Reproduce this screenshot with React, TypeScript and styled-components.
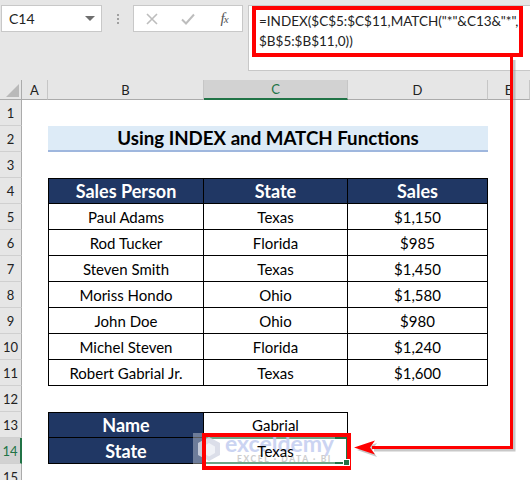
import React from 'react';
import styled, { createGlobalStyle, css } from 'styled-components';

const FONT = `Lato, "Open Sans", "Liberation Sans", sans-serif`;
const NAVY = '#203764';
const GREEN = '#217346';
const COLS = '22px 26px 156px 144px 140px 1fr';

const Global = createGlobalStyle`
  html, body { margin: 0; padding: 0; background: #ffffff; }
  body { font-family: ${FONT}; width: 530px; height: 480px; overflow: hidden; }
  * { box-sizing: border-box; }
`;

const Page = styled.div`
  position: relative;
  width: 530px;
  height: 480px;
  overflow: hidden;
  background: #ffffff;
`;

/* ---------- top formula area ---------- */
const TopBar = styled.div`
  height: 80px;
  background: #e6e6e6;
  display: flex;
  align-items: flex-start;
  padding: 5px 0 0 1px;
`;

const NameBox = styled.div`
  width: 101px;
  height: 27px;
  background: #ffffff;
  border: 1px solid #c8c8c8;
  display: flex;
  align-items: center;
  justify-content: space-between;
  padding: 0 6px 0 7px;
  font-size: 14px;
  color: #222;
`;

const Caret = styled.span`
  width: 0;
  height: 0;
  border-left: 5px solid transparent;
  border-right: 5px solid transparent;
  border-top: 5px solid #6e6e6e;
`;

const Dots = styled.div`
  width: 31px;
  height: 27px;
  display: flex;
  flex-direction: column;
  align-items: center;
  justify-content: center;
  gap: 2px;
  & > i {
    display: block;
    width: 2px;
    height: 2px;
    background: #a0a0a0;
  }
`;

const FxBox = styled.div`
  width: 110px;
  height: 27px;
  background: #ffffff;
  border: 1px solid #c8c8c8;
  display: flex;
  align-items: center;
`;

const IconSlot = styled.span`
  width: 36px;
  display: flex;
  align-items: center;
  justify-content: center;
`;

const Fx = styled.span`
  font-family: "Liberation Serif", "DejaVu Serif", serif;
  font-style: italic;
  font-size: 15px;
  color: #555;
  letter-spacing: -1px;
  & > small {
    font-size: 11px;
  }
`;

const FormulaBar = styled.div`
  flex: 1;
  margin-left: 5px;
  height: 66px;
  background: #ffffff;
  border: 1px solid #c8c8c8;
  border-right: none;
  padding: 5px 0 0 10px;
  font-size: 13.5px;
  line-height: 20px;
  color: #222;
  white-space: pre;
`;

/* ---------- sheet ---------- */
const HeaderRow = styled.div`
  display: grid;
  grid-template-columns: ${COLS};
  height: 20px;
  background: #e6e6e6;
`;

const ColHead = styled.div<{ $active?: boolean }>`
  display: flex;
  align-items: center;
  justify-content: center;
  font-size: 13px;
  color: #222;
  border-right: 1px solid #c6c6c6;
  border-bottom: 1px solid #ababab;
  ${(p) =>
    p.$active &&
    css`
      background: #d2d2d2;
      color: ${GREEN};
      border-bottom: 2px solid ${GREEN};
    `}
`;

const Corner = styled.div`
  border-right: 1px solid #ababab;
  border-bottom: 1px solid #ababab;
  & > svg {
    display: block;
  }
`;

const Row = styled.div`
  display: grid;
  grid-template-columns: ${COLS};
  height: 26px;
`;

const RowNum = styled.div<{ $active?: boolean }>`
  display: flex;
  align-items: center;
  justify-content: center;
  background: #e6e6e6;
  border-right: 1px solid #ababab;
  border-bottom: 1px solid #d0d0d0;
  font-size: 13px;
  color: #222;
  ${(p) =>
    p.$active &&
    css`
      background: #d2d2d2;
      color: ${GREEN};
      border-right: 2px solid ${GREEN};
    `}
`;

const Blank = styled.div``;

const Title = styled.div`
  grid-column: span 3;
  display: flex;
  align-items: center;
  justify-content: center;
  background: #ddebf7;
  border-bottom: 2px solid #9fb7de;
  font-weight: 700;
  font-size: 18.7px;
  color: #000;
`;

type Kind = 'head' | 'data';

const Cell = styled.div<{ $kind: Kind; $top?: boolean; $left?: boolean; $sel?: boolean }>`
  position: relative;
  display: flex;
  align-items: center;
  justify-content: center;
  border-right: 1px solid #000;
  border-bottom: 1px solid #000;
  border-top: ${(p) => (p.$top ? '1px solid #000' : 'none')};
  border-left: ${(p) => (p.$left ? '1px solid #000' : 'none')};
  font-size: 15px;
  color: #000;
  ${(p) =>
    p.$kind === 'head' &&
    css`
      background: ${NAVY};
      color: #ffffff;
      font-weight: 700;
      font-size: 18px;
    `}
  ${(p) =>
    p.$sel &&
    css`
      &::after {
        content: '';
        position: absolute;
        left: -1px;
        top: -1px;
        right: -1px;
        bottom: -1px;
        border: 2px solid ${GREEN};
      }
      &::before {
        content: '';
        position: absolute;
        right: -3px;
        bottom: -3px;
        width: 5px;
        height: 5px;
        background: ${GREEN};
        border: 1px solid #fff;
        z-index: 1;
      }
    `}
`;

/* text of the active cell stays above the faint watermark */
const OnTop = styled.span`
  position: relative;
  z-index: 2;
`;

const Overlay = styled.svg`
  position: absolute;
  left: 0;
  top: 0;
  pointer-events: none;
`;

const WM = styled.text`
  font-family: ${FONT};
  font-weight: 700;
`;

const people = [
  ['Paul Adams', 'Texas', '$1,150'],
  ['Rod Tucker', 'Florida', '$985'],
  ['Steven Smith', 'Texas', '$1,450'],
  ['Moriss Hondo', 'Ohio', '$1,580'],
  ['John Doe', 'Ohio', '$980'],
  ['Michel Steven', 'Florida', '$1,240'],
  ['Robert Gabrial Jr.', 'Texas', '$1,600'],
];

function SheetRow({ n, children }: { n: number; children?: React.ReactNode }) {
  return (
    <Row>
      <RowNum $active={n === 14}>{n}</RowNum>
      <Blank />
      {children ?? (
        <>
          <Blank />
          <Blank />
          <Blank />
        </>
      )}
      <Blank />
    </Row>
  );
}

export default function App() {
  return (
    <Page>
      <Global />
      <TopBar>
        <NameBox>
          C14
          <Caret />
        </NameBox>
        <Dots>
          <i />
          <i />
          <i />
        </Dots>
        <FxBox>
          <IconSlot>
            <svg width="12" height="12" viewBox="0 0 12 12">
              <path d="M1 1 L11 11 M11 1 L1 11" stroke="#bdbdbd" strokeWidth="1.6" />
            </svg>
          </IconSlot>
          <IconSlot>
            <svg width="14" height="12" viewBox="0 0 14 12">
              <path d="M1 6.5 L5 10.5 L13 1.5" stroke="#bdbdbd" strokeWidth="2" fill="none" />
            </svg>
          </IconSlot>
          <IconSlot>
            <Fx>
              f<small>x</small>
            </Fx>
          </IconSlot>
        </FxBox>
        <FormulaBar>{'=INDEX($C$5:$C$11,MATCH("*"&C13&"*",\n$B$5:$B$11,0))'}</FormulaBar>
      </TopBar>

      <HeaderRow>
        <Corner>
          <svg width="21" height="19" viewBox="0 0 21 19">
            <polygon points="6,17 19,17 19,4" fill="#b9b9b9" />
          </svg>
        </Corner>
        <ColHead>A</ColHead>
        <ColHead>B</ColHead>
        <ColHead $active>C</ColHead>
        <ColHead>D</ColHead>
        <ColHead>E</ColHead>
      </HeaderRow>

      <SheetRow n={1} />
      <SheetRow n={2}>
        <Title>Using INDEX and MATCH Functions</Title>
      </SheetRow>
      <SheetRow n={3} />
      <SheetRow n={4}>
        <Cell $kind="head" $top $left>
          Sales Person
        </Cell>
        <Cell $kind="head" $top>
          State
        </Cell>
        <Cell $kind="head" $top>
          Sales
        </Cell>
      </SheetRow>
      {people.map((p, i) => (
        <SheetRow key={p[0]} n={5 + i}>
          <Cell $kind="data" $left>
            {p[0]}
          </Cell>
          <Cell $kind="data">{p[1]}</Cell>
          <Cell $kind="data">{p[2]}</Cell>
        </SheetRow>
      ))}
      <SheetRow n={12} />
      <SheetRow n={13}>
        <Cell $kind="head" $top $left>
          Name
        </Cell>
        <Cell $kind="data" $top>
          Gabrial
        </Cell>
        <Blank />
      </SheetRow>
      <SheetRow n={14}>
        <Cell $kind="head" $left>
          State
        </Cell>
        <Cell $kind="data" $sel>
          <OnTop>Texas</OnTop>
        </Cell>
        <Blank />
      </SheetRow>
      <SheetRow n={15} />

      <Overlay width="530" height="480" viewBox="0 0 530 480">
        {/* watermark */}
        <rect x="193" y="433" width="142" height="33" fill="#ffffff" opacity="0.35" />
        <g opacity="0.85">
          <polygon points="209,437 220,443 220,455 209,461 198,455 198,443" fill="#d5d9e6" />
          <polygon points="209,443 215,446.5 215,453 209,456.5 203,453 203,446.5" fill="#eef0f6" />
          <WM x="225" y="452" fontSize="23" fill="#c3cdf0">
            exceldemy
          </WM>
          <WM x="237" y="462" fontSize="8.5" fill="#c4c4c4" letterSpacing="1.6">
            EXCEL · DATA · BI
          </WM>
        </g>

        {/* shadows */}
        <path d="M514 60 V450 H374" stroke="#9a9a9a" strokeWidth="3" fill="none" opacity="0.55" />
        <polygon points="357,450 377,443 372,450 377,457" fill="#9a9a9a" opacity="0.55" />

        {/* red annotation boxes */}
        <rect x="254" y="8" width="267" height="47" fill="none" stroke="#ff0000" strokeWidth="4" />
        <rect x="204" y="435" width="145" height="33" fill="none" stroke="#ff0000" strokeWidth="4" />

        {/* arrow */}
        <path d="M511.5 57 V447.5 H372" stroke="#ff0000" strokeWidth="3" fill="none" />
        <polygon points="354,447.5 375,440.5 370,447.5 375,454.5" fill="#ff0000" />
      </Overlay>
    </Page>
  );
}
